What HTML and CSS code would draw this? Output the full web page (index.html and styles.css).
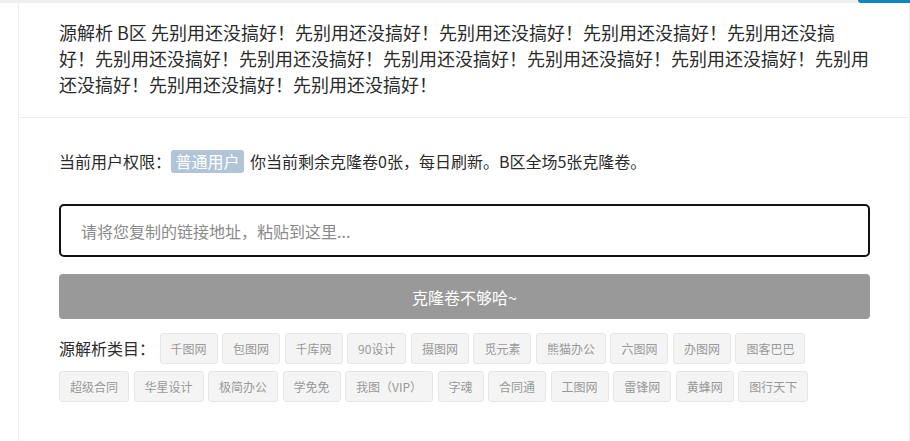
FILE: index.html
```html
<!DOCTYPE html>
<html lang="zh-CN">
<head>
<meta charset="utf-8">
<title>源解析 B区</title>
<link rel="stylesheet" href="styles.css">
</head>
<body>
<div class="topbar"><span class="topbar-btn"></span></div>
<div class="card">
  <div class="card-head">源解析 B区 先别用还没搞好！先别用还没搞好！先别用还没搞好！先别用还没搞好！先别用还没搞好！先别用还没搞好！先别用还没搞好！先别用还没搞好！先别用还没搞好！先别用还没搞好！先别用还没搞好！先别用还没搞好！先别用还没搞好！</div>
  <div class="card-body">
    <div class="status">当前用户权限：<span class="badge">普通用户</span>你当前剩余克隆卷0张，每日刷新。B区全场5张克隆卷。</div>
    <input class="url-input" type="text" placeholder="请将您复制的链接地址，粘贴到这里...">
    <button class="submit" type="button">克隆卷不够哈~</button>
    <div class="cats">
      <span class="cats-label">源解析类目：</span>
      <span class="tag">千图网</span>
      <span class="tag">包图网</span>
      <span class="tag">千库网</span>
      <span class="tag">90设计</span>
      <span class="tag">摄图网</span>
      <span class="tag">觅元素</span>
      <span class="tag">熊猫办公</span>
      <span class="tag">六图网</span>
      <span class="tag">办图网</span>
      <span class="tag">图客巴巴</span>
      <span class="tag">超级合同</span>
      <span class="tag">华星设计</span>
      <span class="tag">极简办公</span>
      <span class="tag">学免免</span>
      <span class="tag">我图（VIP）</span>
      <span class="tag">字魂</span>
      <span class="tag">合同通</span>
      <span class="tag">工图网</span>
      <span class="tag">雷锋网</span>
      <span class="tag">黄蜂网</span>
      <span class="tag">图行天下</span>
    </div>
  </div>
</div>
</body>
</html>
```
FILE: styles.css
```css
html, body {
  margin: 0;
  padding: 0;
  background: #fff;
}
body {
  font-family: "Noto Sans CJK SC", "Microsoft YaHei", "Noto Sans", sans-serif;
  color: #333;
  overflow: hidden;
}
.topbar {
  height: 3px;
  background: #eeeeee;
  display: flex;
  justify-content: flex-end;
}
.topbar-btn {
  display: block;
  width: 52px;
  height: 3px;
  background: #0a86c9;
  border-bottom-left-radius: 3px;
}
.card {
  margin-left: 18px;
  width: 892px;
  box-sizing: border-box;
  border-left: 1px solid #eeeeee;
  border-right: 1px solid #eeeeee;
  min-height: 438px;
}
.card-head {
  padding: 16px 39px 20px 40px;
  font-size: 18px;
  line-height: 26px;
  color: #2b2b2b;
  border-bottom: 1px solid #eeeeee;
}
.card-body {
  padding: 32px 39px 0 40px;
}
.status {
  font-size: 16px;
  line-height: 23px;
  height: 23px;
  color: #2b2b2b;
  display: flex;
  align-items: center;
  white-space: nowrap;
}
.badge {
  display: inline-block;
  background: #b2c5d6;
  color: #fff;
  padding: 0 4.5px;
  height: 23px;
  line-height: 23px;
  border-radius: 3px;
  margin: 0 6px 0 0;
}
.url-input {
  display: block;
  width: 100%;
  box-sizing: border-box;
  height: 53px;
  margin: 31px 0 0 0;
  padding: 0 20px;
  border: 2px solid #111;
  border-radius: 5px;
  font-family: inherit;
  font-size: 16px;
  color: #333;
  outline: none;
  background: #fff;
}
.url-input::placeholder {
  color: #8a8a8a;
}
.submit {
  display: block;
  width: 100%;
  height: 45px;
  margin-top: 17px;
  border: none;
  border-radius: 4px;
  background: #999999;
  color: #fff;
  font-family: inherit;
  font-size: 16px;
  padding: 0;
}
.cats {
  margin-top: 14px;
  display: flex;
  flex-wrap: wrap;
  align-items: center;
  column-gap: 4.5px;
  row-gap: 7px;
}
.cats-label {
  font-size: 16px;
  color: #2b2b2b;
  line-height: 31px;
}
.tag {
  display: inline-block;
  box-sizing: border-box;
  height: 31px;
  line-height: 29px;
  padding: 0 10px;
  border: 1px solid #e6e6e6;
  border-radius: 3px;
  background: #f4f4f4;
  color: #999;
  font-size: 12px;
  white-space: nowrap;
}
```
